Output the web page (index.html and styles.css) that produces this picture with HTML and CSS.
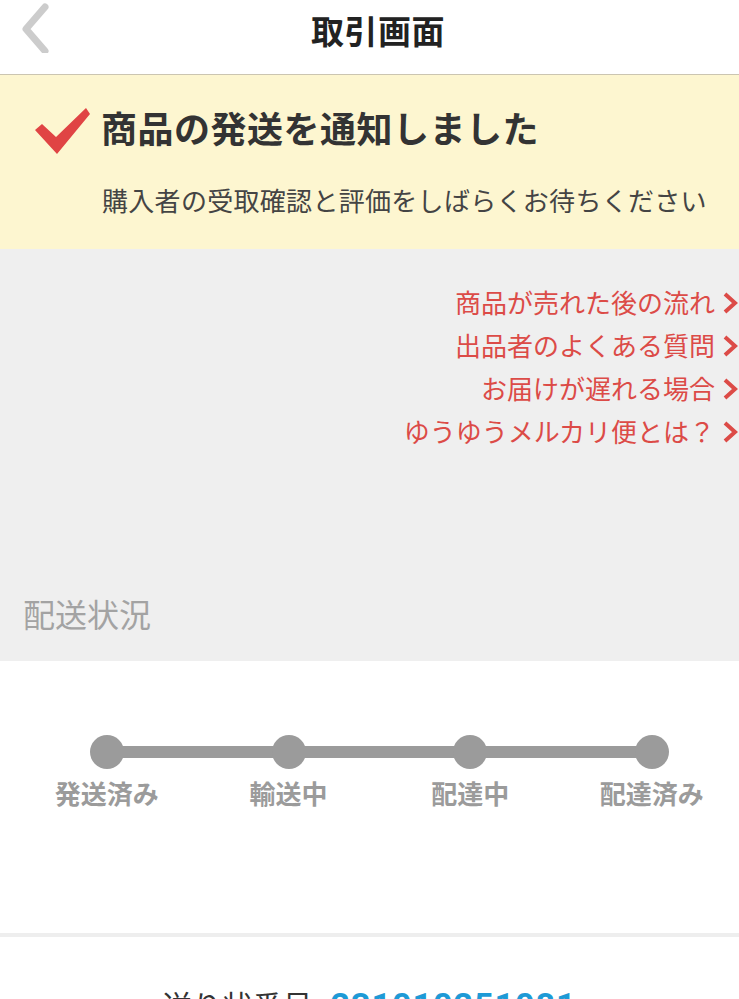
FILE: index.html
```html
<!DOCTYPE html>
<html lang="ja">
<head>
<meta charset="utf-8">
<title>取引画面</title>
<link rel="stylesheet" href="styles.css">
</head>
<body>
<div class="page">
  <header class="topbar">
    <svg class="back" width="40" height="52" viewBox="0 0 40 52"><polyline points="27,6 8,28 27,50" fill="none" stroke="#cccccc" stroke-width="7" stroke-linecap="round" stroke-linejoin="round"/></svg>
    <h1 class="topbar-title">取引画面</h1>
  </header>

  <section class="notice">
    <div class="notice-head">
      <svg class="check" width="58" height="50" viewBox="0 0 58 50"><polygon points="1,24 8,18 22,31 52,2 56,8 23,48" fill="#e04444"/></svg>
      <p class="notice-title">商品の発送を通知しました</p>
    </div>
    <p class="notice-sub">購入者の受取確認と評価をしばらくお待ちください</p>
  </section>

  <section class="help">
    <ul class="links">
      <li class="link">商品が売れた後の流れ<svg class="chev" width="16" height="24" viewBox="0 0 16 24"><polyline points="3,3 13,12 3,21" fill="none" stroke="#dc4b47" stroke-width="4"/></svg></li>
      <li class="link">出品者のよくある質問<svg class="chev" width="16" height="24" viewBox="0 0 16 24"><polyline points="3,3 13,12 3,21" fill="none" stroke="#dc4b47" stroke-width="4"/></svg></li>
      <li class="link">お届けが遅れる場合<svg class="chev" width="16" height="24" viewBox="0 0 16 24"><polyline points="3,3 13,12 3,21" fill="none" stroke="#dc4b47" stroke-width="4"/></svg></li>
      <li class="link">ゆうゆうメルカリ便とは？<svg class="chev" width="16" height="24" viewBox="0 0 16 24"><polyline points="3,3 13,12 3,21" fill="none" stroke="#dc4b47" stroke-width="4"/></svg></li>
    </ul>
    <h2 class="section-label">配送状況</h2>
  </section>

  <section class="status">
    <div class="track">
      <span class="dot"></span><span class="seg"></span>
      <span class="dot"></span><span class="seg"></span>
      <span class="dot"></span><span class="seg"></span>
      <span class="dot"></span>
    </div>
    <div class="labels">
      <span class="label">発送済み</span>
      <span class="label">輸送中</span>
      <span class="label">配達中</span>
      <span class="label">配達済み</span>
    </div>
  </section>

  <div class="divider"></div>

  <section class="tracking">
    <p class="tracking-line"><span class="tracking-key">送り状番号</span><span class="tracking-num">231010251081</span></p>
  </section>
</div>
</body>
</html>
```

FILE: styles.css
```css
html, body {
  margin: 0;
  padding: 0;
  background: #ffffff;
  overflow: hidden;
}
body {
  font-family: "Noto Sans CJK JP", "Noto Sans", sans-serif;
  width: 739px;
  height: 999px;
}
.page {
  width: 739px;
}
.topbar {
  height: 74px;
  border-bottom: 1px solid #cbc5b1;
  display: flex;
  align-items: center;
  justify-content: center;
  position: relative;
  background: #ffffff;
}
.back {
  position: absolute;
  left: 18px;
  top: 1px;
}
.topbar-title {
  margin: 0;
  font-size: 33px;
  line-height: 40px;
  font-weight: 700;
  color: #222222;
  margin-left: 17px;
  margin-top: -14px;
  letter-spacing: 0.5px;
}
.notice {
  background: #fdf6d0;
  height: 174px;
  box-sizing: border-box;
  padding-top: 32px;
}
.notice-head {
  display: flex;
  align-items: center;
  height: 40px;
}
.check {
  margin-left: 34px;
  margin-right: 9px;
  margin-top: 8px;
}
.notice-title {
  margin: 0;
  font-size: 36px;
  line-height: 40px;
  font-weight: 700;
  color: #333333;
  letter-spacing: 0.5px;
}
.notice-sub {
  margin: 35px 0 0 102px;
  font-size: 26px;
  line-height: 36px;
  color: #444444;
  letter-spacing: 0.3px;
}
.help {
  background: #efefef;
  height: 412px;
  box-sizing: border-box;
  padding-top: 31px;
  display: flex;
  flex-direction: column;
}
.links {
  list-style: none;
  margin: 0;
  padding: 0 1px 0 0;
  display: flex;
  flex-direction: column;
  align-items: flex-end;
}
.link {
  font-size: 26px;
  line-height: 43px;
  height: 43px;
  color: #dc4b47;
  display: flex;
  align-items: center;
}
.chev {
  margin-left: 7px;
  margin-top: 2px;
}
.section-label {
  margin: 141px 0 0 23px;
  font-size: 32px;
  line-height: 40px;
  font-weight: 400;
  color: #a3a3a3;
}
.status {
  height: 272px;
  box-sizing: border-box;
  padding-top: 74px;
}
.track {
  margin-left: 90px;
  width: 579px;
  display: flex;
  align-items: center;
  height: 34px;
}
.dot {
  width: 34px;
  height: 34px;
  border-radius: 50%;
  background: #9b9b9b;
  flex: none;
}
.seg {
  flex: 1;
  height: 12px;
  background: #9b9b9b;
  margin: 0 -2px;
}
.labels {
  margin-top: 9px;
  margin-left: 16px;
  display: grid;
  grid-template-columns: repeat(4, 181.67px);
}
.label {
  text-align: center;
  font-size: 26px;
  line-height: 30px;
  font-weight: 700;
  color: #9b9b9b;
}
.divider {
  height: 4px;
  background: #eeeeee;
}
.tracking {
  padding-top: 52px;
  text-align: center;
}
.tracking-line {
  margin: 0;
  font-size: 30px;
  line-height: 30px;
}
.tracking-key {
  color: #333333;
  margin-right: 18px;
}
.tracking-num {
  color: #1e9ad6;
  font-weight: 700;
  font-family: "Roboto", "Noto Sans", sans-serif;
  font-size: 34px;
  letter-spacing: 1px;
}
```
